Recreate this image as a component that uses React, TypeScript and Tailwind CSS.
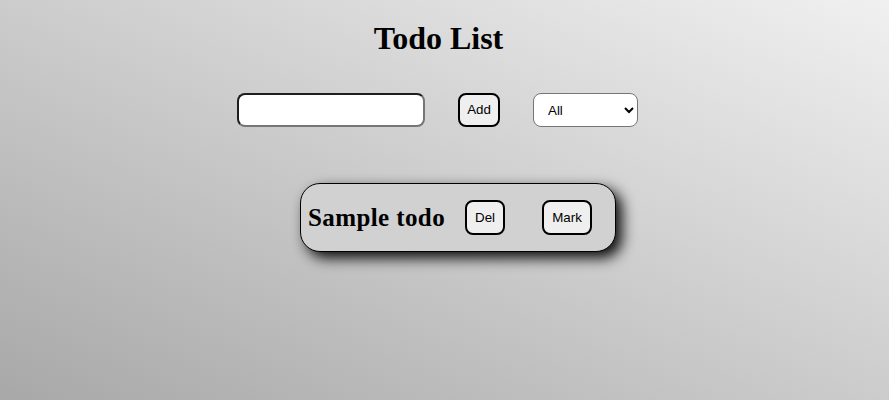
import React, { useState } from 'react';

const serif = { fontFamily: '"Liberation Serif", "DejaVu Serif", serif' };

const App: React.FC = () => {
    const [text, setText] = useState('');
    const [filter, setFilter] = useState('all');

    return (
        <div className="min-h-screen w-full bg-[linear-gradient(to_top_right,#a8a8a8,#f0f0f0)] font-['Liberation_Sans',Arial,sans-serif] text-black">
            {/* Title */}
            <div className="flex justify-center pt-[20px] pr-[12px]">
                <h1 style={serif} className="text-[32px] font-bold leading-[normal]">
                    Todo List
                </h1>
            </div>

            {/* Input row */}
            <div className="mt-[36px] flex justify-center items-center pr-[14px]">
                <input
                    value={text}
                    onChange={(e) => setText(e.target.value)}
                    className="w-[188px] h-[34px] rounded-lg border-2 border-t-[#1e1e1e] border-l-[#1e1e1e] border-b-[#767676] border-r-[#767676] bg-white px-2 outline-none"
                />
                <button className="ml-[33px] w-[42px] h-[34px] rounded-lg border-2 border-black bg-[#efefef] text-[13.33px]">
                    Add
                </button>
                <select
                    value={filter}
                    onChange={(e) => setFilter(e.target.value)}
                    className="ml-[33px] w-[105px] h-[34px] rounded-lg border border-[#767676] bg-white pl-[10px] text-[13.33px]"
                >
                    <option value="all">All</option>
                    <option value="done">Done</option>
                    <option value="todo">Todo</option>
                </select>
            </div>

            {/* Todo card */}
            <div className="mt-[56px] flex justify-center pl-[27px]">
                <div className="w-[316px] h-[69px] flex items-center pl-[7px] rounded-[20px] border border-black bg-[#d1d1d1] shadow-[6px_6px_14px_rgba(0,0,0,0.95)]">
                    <h2 style={serif} className="text-[25px] font-bold leading-[normal] tracking-[0.4px]">
                        Sample todo
                    </h2>
                    <button className="ml-[20px] w-[40px] h-[35px] rounded-lg border-2 border-black bg-[#efefef] text-[13.33px]">
                        Del
                    </button>
                    <button className="ml-[37px] w-[50px] h-[35px] rounded-lg border-2 border-black bg-[#efefef] text-[13.33px]">
                        Mark
                    </button>
                </div>
            </div>
        </div>
    );
};

export default App;
